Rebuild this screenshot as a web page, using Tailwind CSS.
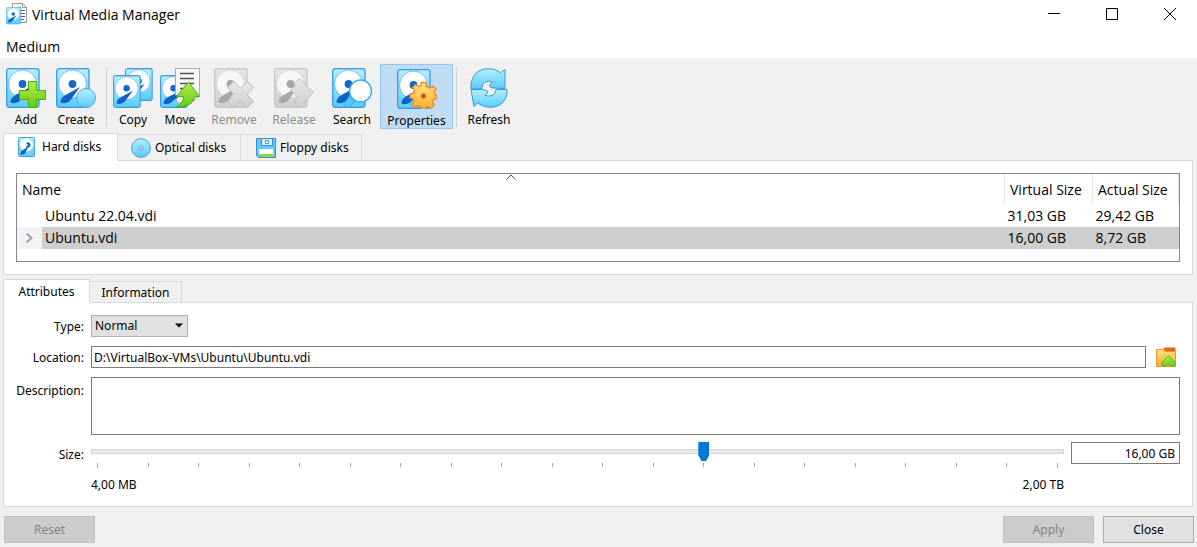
<!DOCTYPE html>
<html lang="en">
<head>
<meta charset="utf-8">
<title>Virtual Media Manager</title>
<script src="https://cdn.jsdelivr.net/npm/@tailwindcss/browser@4"></script>
</head>
<body class="flex min-h-screen flex-col bg-[#f0f0f0] font-['Noto_Sans',sans-serif] text-xs text-black">

<svg class="absolute size-0" aria-hidden="true">
  <defs>
    <linearGradient id="blue" x1="0" y1="0" x2="0" y2="1"><stop offset="0" stop-color="#b4f0ff"/><stop offset="1" stop-color="#5accff"/></linearGradient>
    <linearGradient id="gray" x1="0" y1="0" x2="0" y2="1"><stop offset="0" stop-color="#e6e6e6"/><stop offset="1" stop-color="#d0d0d0"/></linearGradient>
    <linearGradient id="green" x1="0" y1="0" x2="0" y2="1"><stop offset="0" stop-color="#b5ef4c"/><stop offset="1" stop-color="#62cb12"/></linearGradient>
    <linearGradient id="orange" x1="0" y1="0" x2="0" y2="1"><stop offset="0" stop-color="#ffe27c"/><stop offset="1" stop-color="#ffac33"/></linearGradient>
    <symbol id="disk" viewBox="0 0 34 40">
      <rect x=".7" y=".7" width="32.300" height="38.600" rx="2.500" fill="url(#blue)" stroke="#3f97dc" stroke-width="1.300"/>
      <circle cx="16.500" cy="16" r="14" fill="#fff" stroke="#56aeee" stroke-width=".8"/>
      <circle cx="16.500" cy="16" r="3.900" fill="#1468c8"/>
      <path d="M24 19 9.500 27Q4 30.500 4.500 34.500Q10 37 15 31.500Z" fill="#0f62c4"/>
    </symbol>
    <symbol id="disk-off" viewBox="0 0 34 40">
      <rect x=".7" y=".7" width="32.300" height="38.600" rx="2.500" fill="url(#gray)" stroke="#c6c6c6" stroke-width="1.300"/>
      <circle cx="16.500" cy="16" r="14" fill="#f7f7f7" stroke="#cecece" stroke-width=".8"/>
      <circle cx="16.500" cy="16" r="3.900" fill="#a6a6a6"/>
      <path d="M24 19 9.500 27Q4 30.500 4.500 34.500Q10 37 15 31.500Z" fill="#a8a8a8"/>
    </symbol>
  </defs>
</svg>

<header class="bg-white">
  <div class="flex h-[37px] items-start justify-between">
    <div class="flex items-start gap-1 pt-[3px] pl-1.5">
      <svg class="size-[22px]" viewBox="0 0 22 22">
        <path d="M6.500 .5H17L20.500 4V19.500H6.500Z" fill="#fafafa" stroke="#999"/>
        <path d="M16.500 1V4.500H20.500" fill="none" stroke="#999"/>
        <path d="M12 4.500h3M13 7.500h6M14 10.500h5M14 13.500h5M14 16.500h4" stroke="#666"/>
        <use href="#disk" x="0" y="4" width="15" height="17.500"/>
      </svg>
      <h1 class="pt-0.5 font-['Open_Sans',sans-serif] text-sm leading-5">Virtual Media Manager</h1>
    </div>
    <div class="flex gap-2.5 pr-[3px]">
      <button aria-label="Minimize" class="flex h-7 w-12 items-center justify-center"><svg class="size-3" viewBox="0 0 12 12"><path d="M0 5.500h12" stroke="#000"/></svg></button>
      <button aria-label="Maximize" class="flex h-7 w-12 items-center justify-center"><svg class="size-3" viewBox="0 0 12 12"><path d="M.5.5h11v11H.5z" fill="none" stroke="#000"/></svg></button>
      <button aria-label="Close window" class="flex h-7 w-12 items-center justify-center"><svg class="size-3" viewBox="0 0 12 12"><path d="M0 0 12 12M12 0 0 12" stroke="#000"/></svg></button>
    </div>
  </div>
  <nav class="h-[21px] px-1.5"><button class="block font-['Open_Sans',sans-serif] text-sm leading-5">Medium</button></nav>
</header>

<div role="toolbar" aria-label="Medium actions" class="flex h-[75px] items-start pt-1.5 pl-px leading-4">
  <button class="flex h-[65px] w-[50px] flex-col items-center gap-1 pt-1">
    <svg class="size-10 shrink-0" viewBox="0 0 40 40"><use href="#disk" width="34" height="40"/>
      <path d="M22.500 13.500h8v9h9v9h-9v8h-8v-8h-9v-9h9z" fill="url(#green)" stroke="#4dab16"/></svg>Add
  </button>
  <button class="flex h-[65px] w-[50px] flex-col items-center gap-1 pt-1">
    <svg class="size-10 shrink-0" viewBox="0 0 40 40"><use href="#disk" width="34" height="40"/>
      <circle cx="30" cy="30" r="9.500" fill="url(#blue)" stroke="#4ea8e5"/></svg>Create
  </button>
  <div class="mx-[5px] mt-[3px] h-[60px] w-px bg-[#d2d2d2]"></div>
  <button class="flex h-[65px] w-[42px] flex-col items-center gap-1 pt-1">
    <svg class="size-10 shrink-0" viewBox="0 0 40 40"><use href="#disk" x="12" width="28" height="33"/><use href="#disk" y="7" width="28" height="33"/></svg>Copy
  </button>
  <button class="ml-px flex h-[65px] w-[50px] flex-col items-center gap-1 pt-1">
    <svg class="size-10 shrink-0" viewBox="0 0 40 40"><use href="#disk" y="7" width="28" height="33"/>
      <path d="M15.500 .5h24v27.500l-9 7h-13l-2-6z" fill="#f8f8f8" stroke="#aaa"/><path d="M20 5.500h14M20 10.500h14M20 15.500h14M20 20.500h14M20 25.500h14" stroke="#555" stroke-width="1.500"/>
      <path d="M23.500 25.500 9 29Q4 32 4 35.500Q9 37.500 13.500 32.500Z" fill="#0f62c4"/>
      <path d="M28.500 14 39.500 28.500H34.500Q34 38.500 16 39.500 23.500 35 23.500 28.500H16.500Z" fill="url(#green)" stroke="#4dab16"/></svg>Move
  </button>
  <button disabled class="flex h-[65px] w-[58px] flex-col items-center gap-1 pt-1 text-[#8b8b8b]">
    <svg class="size-10 shrink-0" viewBox="0 0 40 40"><use href="#disk-off" width="34" height="40"/>
      <path d="M19.500 13.500 26.500 20 33.500 13.500 39.500 19.500 33 26.500 39.500 33.500 33.500 39.500 26.500 33 19.500 39.500 13.500 33.500 20 26.500 13.500 19.500Z" fill="url(#gray)" stroke="#bdbdbd"/></svg>Remove
  </button>
  <button disabled class="flex h-[65px] w-[62px] flex-col items-center gap-1 pt-1 text-[#8b8b8b]">
    <svg class="size-10 shrink-0" viewBox="0 0 40 40"><use href="#disk-off" width="34" height="40"/>
      <path d="M25.500 10.500 39.500 24.500 25.500 39 19.500 33.500 23.500 29 16.500 22 21.500 17.500 19.500 15.500Z" fill="url(#gray)" stroke="#bdbdbd"/></svg>Release
  </button>
  <button class="flex h-[65px] w-[54px] flex-col items-center gap-1 pt-1">
    <svg class="size-10 shrink-0" viewBox="0 0 40 40"><use href="#disk" width="34" height="40"/>
      <path d="M18.500 28 12 35Q11 38 14 39.500L18 38.500 24 32Z" fill="#53c8fa" stroke="#3ba2e8"/>
      <circle cx="28.500" cy="23" r="11" fill="#fff" stroke="#35aff1" stroke-width="1.500"/></svg>Search
  </button>
  <button aria-pressed="true" class="ml-px flex h-[65px] w-[73px] flex-col items-center gap-1 border border-[#90c8f6] bg-[#c0dcf3] pt-1">
    <svg class="size-10 shrink-0" viewBox="0 0 40 40"><use href="#disk" width="34" height="40"/>
      <path d="M24 13.500h5l.5 4 3.500 1.500 3-2 3 3-2 3.500 1 2.500h2v4h-3l-1.500 3 2 3-3.500 3.500-3-2-2.500 1v2h-4l-.5-3-3-1-3 2-3-3 2-3.500-1-2.500-3-.5v-4l3.500-.5 1-3-2-3 3-3 3.500 2 2-1Z" fill="url(#orange)" stroke="#ed8726" stroke-width="1.300"/>
      <circle cx="26.500" cy="27" r="2.300" fill="#b35a10" stroke="#e36b14"/></svg>Properties
  </button>
  <div class="mx-[3px] mt-[3px] h-[60px] w-px bg-[#d2d2d2]"></div>
  <button class="flex h-[65px] w-[58px] flex-col items-center gap-1 pt-1">
    <svg class="size-10 shrink-0" viewBox="0 0 40 40"><g fill="url(#blue)" stroke="#3e97d3" stroke-linejoin="round">
      <path d="M2 21C1 8 9 .7 19 .7Q27 .7 31.500 5L36 1.500V20.500L25 20Q20.500 20 20.500 17.500L23.500 14Q14 11 12.500 21Z"/>
      <path d="M38 21.500C38.500 33 31 39.300 21 39.300Q14 39.300 8.500 35L5 38.500 2 21.500H13Q19 22 19 24L16 27.500Q26 30 27 21.500Z"/></g></svg>Refresh
  </button>
</div>

<main class="flex flex-col gap-1 pr-1 pl-[3px]">
  <section>
    <div role="tablist" aria-label="Medium types" class="flex h-[27px] items-end">
      <button role="tab" aria-selected="true" class="relative z-10 -mb-px flex h-7 w-[115px] items-center gap-[7px] border border-b-0 border-[#d9d9d9] bg-white pb-px pl-3.5">
        <svg class="h-5 w-[17px]" viewBox="0 0 17 20"><rect x=".5" y=".5" width="16" height="19" rx="1" fill="url(#blue)" stroke="#4a9edd"/><circle cx="8.500" cy="8" r="6.500" fill="#fff"/><path d="M8.500 5.500a2.800 2.800 0 1 1 1.500 5.300L7 16.500Q5 18.500 2.500 17.500Q2 14.500 4 13.500L8 11Z" fill="#1468c8"/><circle cx="8.500" cy="8" r="1.200" fill="#fff"/></svg>Hard disks</button>
      <button role="tab" aria-selected="false" class="flex h-[26px] w-[123px] items-center gap-1 border-t border-r border-[#d9d9d9] pt-px pl-[13px]">
        <svg class="size-5" viewBox="0 0 20 20"><circle cx="10" cy="10" r="9.300" fill="url(#blue)" stroke="#3f9ad7"/><circle cx="10" cy="10" r="2.200" fill="#d7f4ff" stroke="#5b9fc9"/><circle cx="10" cy="10" r=".8" fill="#3f86b5"/></svg>Optical disks</button>
      <button role="tab" aria-selected="false" class="flex h-[26px] w-[121px] items-center gap-1 border-t border-r border-[#d9d9d9] pt-px pl-[15px]">
        <svg class="size-5" viewBox="0 0 20 20"><path d="M.5.500h19v19H2.500L.5 17.500Z" fill="#69c8fa" stroke="#3490d9"/><path d="M5.500.500h11v7h-11z" fill="#d9f0fb" stroke="#3490d9"/><path d="M9.500 2.500h3v3h-3z" fill="#fff" stroke="#4c9ed4"/><path d="M3 11h14v8H3z" fill="#fff"/><path d="M3 16h14v3H3z" fill="#8ddc33"/></svg>Floppy disks</button>
    </div>
    <div class="border border-[#d9d9d9] bg-white px-3 pt-3 pb-3">
      <div class="h-[89px] border border-[#828790]">
        <table class="w-full table-fixed border-collapse text-left font-['Open_Sans',sans-serif] text-sm leading-5">
          <colgroup><col class="w-[25px]"><col><col class="w-[88px]"><col class="w-[86px]"></colgroup>
          <thead><tr class="h-[31px]">
            <th colspan="2" aria-sort="ascending" class="relative pl-[5px] font-normal">Name
              <svg class="absolute top-0 left-1/2 h-1.5 w-2.5 -translate-x-1/2" viewBox="0 0 10 6"><path d="M.5 5.500 5 1 9.500 5.500" fill="none" stroke="#555"/></svg></th>
            <th class="border-l border-[#e5e5e5] pl-[5px] font-normal whitespace-nowrap">Virtual Size</th>
            <th class="border-x border-[#e5e5e5] pl-[5px] font-normal whitespace-nowrap">Actual Size</th>
          </tr></thead>
          <tbody>
            <tr class="h-[22px]"><td></td><td class="pl-[3px]">Ubuntu 22.04.vdi</td><td class="pl-[3px]">31,03 GB</td><td class="pl-[3px]">29,42 GB</td></tr>
            <tr class="h-[22px] bg-[#cecece]"><td class="bg-[#f3f3f3] pl-2"><button aria-label="Expand Ubuntu.vdi" class="block"><svg class="h-3 w-2" viewBox="0 0 8 12"><path d="M1.500 1.500 6.500 6 1.500 10.500" fill="none" stroke="#a0a0a0" stroke-width="2"/></svg></button></td><td class="pl-[3px]">Ubuntu.vdi</td><td class="pl-[3px]">16,00 GB</td><td class="pl-[3px]">8,72 GB</td></tr>
          </tbody>
        </table>
      </div>
    </div>
  </section>

  <section>
    <div role="tablist" aria-label="Medium details" class="flex h-[23px] items-end">
      <button role="tab" aria-selected="true" class="relative z-10 -mb-px h-6 w-[87px] border border-b-0 border-[#d9d9d9] bg-white">Attributes</button>
      <button role="tab" aria-selected="false" class="h-[21px] w-[92px] border-t border-r border-[#d9d9d9] pt-px">Information</button>
    </div>
    <form class="grid grid-cols-[80px_1fr] gap-x-[7px] gap-y-[9px] border border-[#d9d9d9] bg-white pt-3 pr-3 pb-[13px] leading-4">
      <label for="type" class="pt-1 text-right">Type:</label>
      <div class="relative w-[97px]">
        <select id="type" class="block h-[22px] w-full appearance-none border border-[#adadad] bg-[#e1e1e1] pl-[3px]"><option>Normal</option></select>
        <svg class="pointer-events-none absolute top-2 right-[5px] h-[5px] w-2" viewBox="0 0 8 5"><path d="M0 .5h8L4 4.500Z"/></svg>
      </div>
      <label for="location" class="pt-1 text-right">Location:</label>
      <div class="flex items-center gap-2.5">
        <input id="location" value="D:\VirtualBox-VMs\Ubuntu\Ubuntu.vdi" class="h-[22px] min-w-0 flex-1 border border-[#7a7a7a] px-0.5">
        <button type="button" aria-label="Choose location" class="mr-1"><svg class="size-5" viewBox="0 0 20 20"><path d="M7.500 4V1.500L9 .5h9.500l1 1V6h-12Z" fill="#e8641b"/><path d="M.5 2.500H7L9 4.500H19.500V19.500H.5Z" fill="url(#orange)" stroke="#ef9136"/><path d="M12.500 8.500 19.500 16Q19 19.500 16 19.500L12.500 17 9 19.500Q6 19.500 5.500 16Z" fill="url(#green)" stroke="#55b51a"/></svg></button>
      </div>
      <label for="description" class="pt-1.5 text-right">Description:</label>
      <textarea id="description" class="block h-[58px] w-full resize-none border border-[#7a7a7a] px-1"></textarea>
      <label for="size" class="pt-[3px] text-right">Size:</label>
      <div class="-mt-0.5 flex items-start gap-[7px]">
        <div class="flex-1">
          <input id="size" type="range" min="0" max="19" value="12" class="block h-[19px] w-full appearance-none bg-transparent [&::-webkit-slider-runnable-track]:h-[5px] [&::-webkit-slider-runnable-track]:border [&::-webkit-slider-runnable-track]:border-[#d6d6d6] [&::-webkit-slider-runnable-track]:bg-[#e7eaea] [&::-webkit-slider-thumb]:-mt-2 [&::-webkit-slider-thumb]:h-[19px] [&::-webkit-slider-thumb]:w-[11px] [&::-webkit-slider-thumb]:appearance-none [&::-webkit-slider-thumb]:bg-[#0078d7] [&::-webkit-slider-thumb]:[clip-path:polygon(0_0,100%_0,100%_70%,70%_100%,30%_100%,0_70%)]">
          <div aria-hidden="true" class="mt-0.5 flex h-[5px] justify-between px-1.5">
            <i class="h-[5px] w-px bg-[#a8a49c]"></i><i class="h-1 w-px bg-[#a8a49c]"></i><i class="h-1 w-px bg-[#a8a49c]"></i><i class="h-1 w-px bg-[#a8a49c]"></i><i class="h-1 w-px bg-[#a8a49c]"></i><i class="h-1 w-px bg-[#a8a49c]"></i><i class="h-1 w-px bg-[#a8a49c]"></i><i class="h-1 w-px bg-[#a8a49c]"></i><i class="h-1 w-px bg-[#a8a49c]"></i><i class="h-1 w-px bg-[#a8a49c]"></i><i class="h-1 w-px bg-[#a8a49c]"></i><i class="h-1 w-px bg-[#a8a49c]"></i><i class="h-1 w-px bg-[#a8a49c]"></i><i class="h-1 w-px bg-[#a8a49c]"></i><i class="h-1 w-px bg-[#a8a49c]"></i><i class="h-1 w-px bg-[#a8a49c]"></i><i class="h-1 w-px bg-[#a8a49c]"></i><i class="h-1 w-px bg-[#a8a49c]"></i><i class="h-1 w-px bg-[#a8a49c]"></i><i class="h-[5px] w-px bg-[#a8a49c]"></i>
          </div>
          <div class="mt-[9px] flex justify-between"><span>4,00 MB</span><span>2,00 TB</span></div>
        </div>
        <input aria-label="Size value" value="16,00 GB" class="h-[22px] w-[109px] border border-[#7a7a7a] px-1 text-right">
      </div>
    </form>
  </section>
</main>

<footer class="flex gap-[9px] pt-[9px] pr-[3px] pb-1 pl-1">
  <button disabled class="mr-auto h-[27px] w-[91px] border border-[#bfbfbf] bg-[#cccccc] text-[#838383]">Reset</button>
  <button disabled class="h-[27px] w-[91px] border border-[#bfbfbf] bg-[#cccccc] text-[#838383]">Apply</button>
  <button class="h-[27px] w-[91px] border border-[#adadad] bg-[#e1e1e1]">Close</button>
</footer>
</body>
</html>
